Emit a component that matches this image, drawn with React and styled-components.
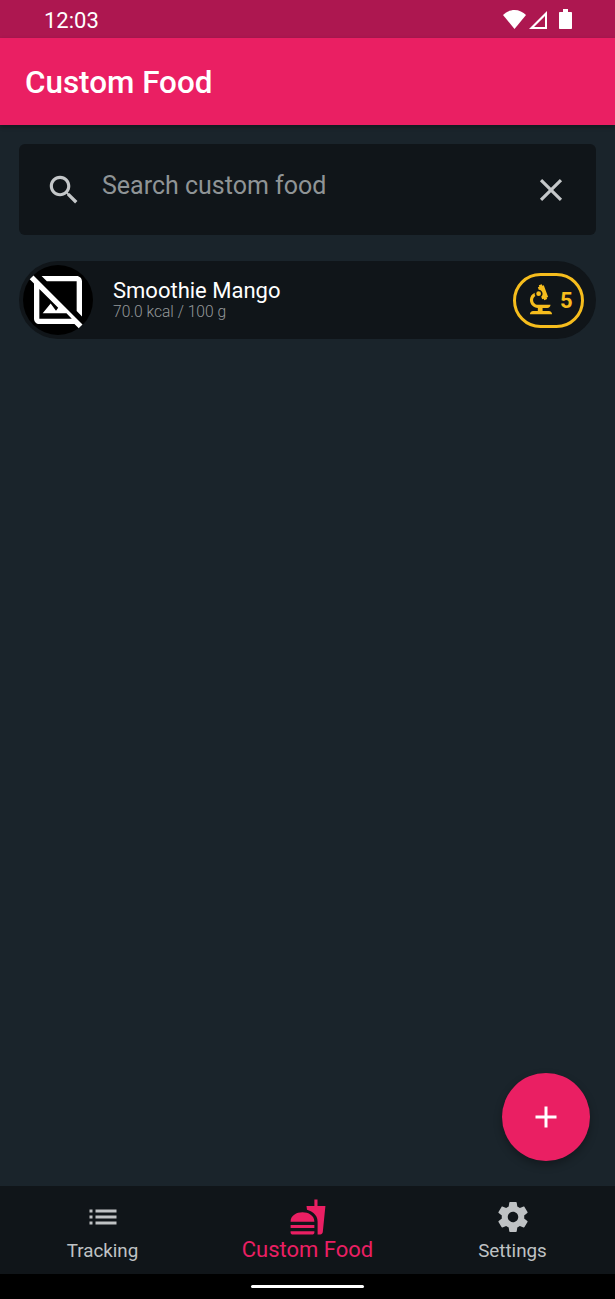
import React from 'react';
import styled, { createGlobalStyle } from 'styled-components';

const GlobalStyle = createGlobalStyle`
    html, body {
        margin:0;
        padding:0;
        background:#000;
    }
    * {
        box-sizing:border-box;
    }
`

const Screen = styled.div`
    display:flex;
    flex-direction:column;
    width:615px;
    height:1299px;
    overflow:hidden;
    background-color:#1a242b;
    font-family:'Roboto', 'Liberation Sans', sans-serif;
`

const StatusBar = styled.div`
    display:flex;
    align-items:center;
    justify-content:space-between;
    height:38px;
    padding:2px 43px 0 44px;
    background-color:#ad1750;
    color:#fff;
    font-size:22px;
`

const StatusIcons = styled.div`
    display:flex;
    align-items:center;
    line-height:0;
`

const AppBar = styled.header`
    display:flex;
    align-items:center;
    height:87px;
    padding:2px 25px 0;
    background-color:#ea1f63;
    color:#fff;
    font-size:31.4px;
    font-weight:500;
    box-shadow:0 2px 4px rgba(0,0,0,0.3);
`

const Main = styled.main`
    position:relative;
    flex:1;
    display:flex;
    flex-direction:column;
    gap:26px;
    padding:19px 19px 0;
`

const SearchBox = styled.div`
    display:flex;
    align-items:center;
    height:91px;
    padding:0 26px;
    border-radius:6px;
    background-color:#101519;
    color:#c4c7c9;
`

const SearchText = styled.div`
    flex:1;
    margin-left:19px;
    margin-bottom:8px;
    font-size:25px;
    color:#8f9496;
`

const FoodRow = styled.div`
    display:flex;
    align-items:center;
    height:78px;
    padding:0 12px 0 4px;
    border-radius:39px;
    background-color:#101519;
`

const Avatar = styled.div`
    display:flex;
    align-items:center;
    justify-content:center;
    flex:none;
    width:70px;
    height:70px;
    border-radius:50%;
    background-color:#000;
    color:#fff;
    line-height:0;
`

const FoodInfo = styled.div`
    flex:1;
    display:flex;
    flex-direction:column;
    margin-left:20px;
`

const FoodName = styled.div`
    font-size:22px;
    line-height:24px;
    color:#fff;
`

const FoodMeta = styled.div`
    font-size:15.6px;
    line-height:18px;
    font-weight:300;
    color:#94989a;
`

const Score = styled.div`
    display:flex;
    align-items:center;
    width:71px;
    height:55px;
    padding-left:6px;
    border:3px solid #f6bd1d;
    border-radius:28px;
    color:#f6bd1d;
    font-size:22px;
    font-weight:700;
`

const Fab = styled.button`
    position:absolute;
    right:25px;
    bottom:25px;
    display:flex;
    align-items:center;
    justify-content:center;
    width:88px;
    height:88px;
    padding:0;
    border:none;
    border-radius:50%;
    background-color:#ea1f63;
    color:#fff;
    box-shadow:0 4px 8px rgba(0,0,0,0.3);
`

const BottomNav = styled.nav`
    display:grid;
    grid-template-columns:205px 205px 205px;
    height:88px;
    background-color:#101519;
`

const NavItem = styled.div`
    display:flex;
    flex-direction:column;
    align-items:center;
    gap:${props => props.active ? '1px' : '4px'};
    padding-top:${props => props.active ? '12px' : '13px'};
    color:${props => props.active ? '#ea1f63' : '#bfc2c4'};
    font-size:${props => props.active ? '22px' : '18.8px'};
    line-height:${props => props.active ? '26px' : '24px'};
`

const GestureBar = styled.div`
    display:flex;
    align-items:center;
    justify-content:center;
    height:25px;
    background-color:#000;
`

const Handle = styled.div`
    width:113px;
    height:3px;
    border-radius:2px;
    background-color:#fff;
`

function Icon({ size, children }) {
    return (
        <svg width={size} height={size} viewBox="0 0 24 24" fill="currentColor">
            {children}
        </svg>
    );
}

function App() {
    return (
        <Screen>
            <GlobalStyle />
            <StatusBar>
                <span>12:03</span>
                <StatusIcons>
                    <svg width="72" height="22" viewBox="0 0 72 22" fill="#fff">
                        <path d="M3 6C6 3 10 1 14.5 1S23 3 26 6L14.5 20z" />
                        <path fillRule="evenodd" d="M47 2v18H29zM45 7 34 18h11z" />
                        <path d="M59 4c0-.6.4-1 1-1h3V0h5v3h3c.6 0 1 .4 1 1v15c0 .6-.4 1-1 1H60c-.6 0-1-.4-1-1z" />
                    </svg>
                </StatusIcons>
            </StatusBar>
            <AppBar>Custom Food</AppBar>
            <Main>
                <SearchBox>
                    <Icon size={38}>
                        <path d="M15.5 14h-.79l-.28-.27C15.41 12.59 16 11.11 16 9.5 16 5.91 13.09 3 9.5 3S3 5.91 3 9.5 5.91 16 9.5 16c1.61 0 3.09-.59 4.23-1.57l.27.28v.79l5 4.99L20.49 19l-4.99-5zm-6 0C7.01 14 5 11.99 5 9.5S7.01 5 9.5 5 14 7.01 14 9.5 11.99 14 9.5 14z" />
                    </Icon>
                    <SearchText>Search custom food</SearchText>
                    <Icon size={38}>
                        <path d="M19 6.41L17.59 5 12 10.59 6.41 5 5 6.41 10.59 12 5 17.59 6.41 19 12 13.41 17.59 19 19 17.59 13.41 12z" />
                    </Icon>
                </SearchBox>
                <FoodRow>
                    <Avatar>
                        <Icon size={64}>
                            <path d="M21.19 21.19 2.81 2.81 1.39 4.22 3 5.83V19c0 1.1.9 2 2 2h13.17l1.61 1.61 1.41-1.42zM5 19V7.83l7.07 7.07-.82 1.1-2-2.67L6.25 17h8.92l2 2H5zM7.83 5l-2-2H19c1.1 0 2 .9 2 2v13.17l-2-2V5H7.83z" />
                        </Icon>
                    </Avatar>
                    <FoodInfo>
                        <FoodName>Smoothie Mango</FoodName>
                        <FoodMeta>70.0 kcal / 100 g</FoodMeta>
                    </FoodInfo>
                    <Score>
                        <Icon size={38}>
                            <path d="M7 19c-1.1 0-2 .9-2 2h14c0-1.1-.9-2-2-2h-4v-2h3c1.1 0 2-.9 2-2h-8c-1.66 0-3-1.34-3-3 0-1.09.59-2.04 1.46-2.56C8.17 9.03 8 8.54 8 8c0-.21.04-.42.09-.62C6.28 8.13 5 9.92 5 12c0 2.76 2.24 5 5 5v2H7z" />
                            <path d="M10.56 5.51C11.91 5.54 13 6.64 13 8c0 .75-.33 1.41-.85 1.87l.59 1.62.94-.34.34.94 1.88-.68-.34-.94.94-.34-2.74-7.52-.94.34-.34-.94-1.88.68.34.94-.94.35.56 1.53z" />
                            <circle cx="10.5" cy="8" r="1.5" />
                        </Icon>
                        5
                    </Score>
                </FoodRow>
                <Fab>
                    <Icon size={36}>
                        <path d="M19 13h-6v6h-2v-6H5v-2h6V5h2v6h6v2z" />
                    </Icon>
                </Fab>
            </Main>
            <BottomNav>
                <NavItem>
                    <Icon size={36}>
                        <path d="M3 13h2v-2H3v2zm0 4h2v-2H3v2zm0-8h2V7H3v2zm4 4h14v-2H7v2zm0 4h14v-2H7v2zM7 7v2h14V7H7z" />
                    </Icon>
                    Tracking
                </NavItem>
                <NavItem active>
                    <Icon size={38}>
                        <path d="M18.06 22.99h1.66c.84 0 1.53-.64 1.63-1.46L23 5.05h-5V1h-1.97v4.05h-4.97l.3 2.34c1.71.47 3.31 1.32 4.27 2.26 1.44 1.42 2.43 2.89 2.43 5.29v8.05zM1 21.99V21h15.03v.99c0 .55-.45 1-1.01 1H2.01c-.56 0-1.01-.45-1.01-1zm15.03-7c0-8-15.03-8-15.03 0h15.03zM1.02 17h15v2h-15z" />
                    </Icon>
                    Custom Food
                </NavItem>
                <NavItem>
                    <Icon size={36}>
                        <path d="M19.43 12.98c.04-.32.07-.64.07-.98s-.03-.66-.07-.98l2.11-1.65c.19-.15.24-.42.12-.64l-2-3.46c-.12-.22-.39-.3-.61-.22l-2.49 1c-.52-.4-1.08-.73-1.69-.98l-.38-2.65C14.46 2.18 14.25 2 14 2h-4c-.25 0-.46.18-.49.42l-.38 2.65c-.61.25-1.17.59-1.69.98l-2.49-1c-.23-.09-.49 0-.61.22l-2 3.46c-.13.22-.07.49.12.64l2.11 1.65c-.04.32-.07.65-.07.98s.03.66.07.98l-2.11 1.65c-.19.15-.24.42-.12.64l2 3.46c.12.22.39.3.61.22l2.49-1c.52.4 1.08.73 1.69.98l.38 2.65c.03.24.24.42.49.42h4c.25 0 .46-.18.49-.42l.38-2.65c.61-.25 1.17-.59 1.69-.98l2.49 1c.23.09.49 0 .61-.22l2-3.46c.12-.22.07-.49-.12-.64l-2.11-1.65zM12 15.5c-1.93 0-3.5-1.57-3.5-3.5s1.57-3.5 3.5-3.5 3.5 1.57 3.5 3.5-1.57 3.5-3.5 3.5z" />
                    </Icon>
                    Settings
                </NavItem>
            </BottomNav>
            <GestureBar>
                <Handle />
            </GestureBar>
        </Screen>
    );
}

export default App;
